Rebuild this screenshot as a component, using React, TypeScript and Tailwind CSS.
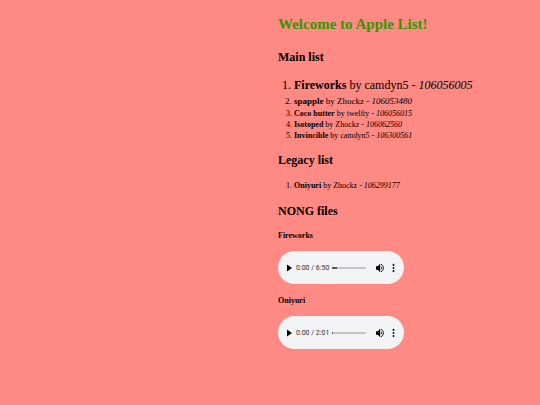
type Song = {
    name: string;
    author: string;
    id: string;
    size: string;
};

const mainList: Song[] = [
    { name: "Fireworks", author: "camdyn5", id: "106056005", size: "text-[12px] leading-[17px]" },
    { name: "spapple", author: "Zhockz", id: "106053480", size: "text-[9px] leading-[14px]" },
    { name: "Coco butter", author: "twelfty", id: "106056015", size: "text-[8px] leading-[11px]" },
    { name: "Isotoped", author: "Zhockz", id: "106062560", size: "text-[8px] leading-[11px]" },
    { name: "Invincible", author: "camdyn5", id: "106300561", size: "text-[8px] leading-[11px]" },
];

const legacyList: Song[] = [
    { name: "Oniyuri", author: "Zhockz", id: "106299177", size: "text-[8px] leading-[11px]" },
];

function SongList({ songs }: { songs: Song[] }) {
    return (
        <ol className="list-decimal pl-4 mt-3">
            {songs.map((song) => (
                <li key={song.id} className={song.size}>
                    <b>{song.name}</b> by {song.author} - <i>{song.id}</i>
                </li>
            ))}
        </ol>
    );
}

function Player({ title, duration, thumb }: { title: string; duration: string; thumb: string }) {
    return (
        <div className="mt-[10px] flex h-[33px] w-[126px] items-center rounded-full bg-[#f1f3f4] px-[9px] font-[Roboto,sans-serif]">
            <button type="button" aria-label={`Play ${title}`} className="cursor-pointer">
                <svg width="5" height="8" viewBox="0 0 5 8" className="block">
                    <path d="M0 0.5L5 4L0 7.5Z" fill="#000" />
                </svg>
            </button>
            <span className="ml-1 w-9 text-[7px] leading-3 whitespace-nowrap text-[#303133]">
                0:00 / {duration}
            </span>
            <input
                type="range"
                min="0"
                max="100"
                defaultValue="0"
                aria-label={`${title} position`}
                className={`h-0.5 w-[34px] appearance-none rounded-full bg-[#c2c4c5] [&::-webkit-slider-thumb]:h-0.5 [&::-webkit-slider-thumb]:appearance-none [&::-webkit-slider-thumb]:bg-[#55575a] ${thumb}`}
            />
            <button type="button" aria-label={`Mute ${title}`} className="ml-auto cursor-pointer">
                <svg width="8" height="10" viewBox="0 0 8 10" className="block">
                    <path d="M0 3.3H1.8L4.2 0.8V9.2L1.8 6.7H0Z" fill="#000" />
                    <path d="M5 3.2C6 4 6 6 5 6.8Z" fill="#000" />
                    <path d="M5 1.2C8.1 2.4 8.1 7.6 5 8.8" fill="none" stroke="#000" strokeWidth="0.9" />
                </svg>
            </button>
            <button type="button" aria-label={`More options for ${title}`} className="ml-2 cursor-pointer">
                <svg width="3" height="10" viewBox="0 0 3 10" className="block">
                    <ellipse cx="1.5" cy="1.9" rx="0.9" ry="1.1" fill="#000" />
                    <ellipse cx="1.5" cy="5" rx="0.9" ry="1.1" fill="#000" />
                    <ellipse cx="1.5" cy="8.1" rx="0.9" ry="1.1" fill="#000" />
                </svg>
            </button>
        </div>
    );
}

export default function App() {
    return (
        <div className="min-h-screen bg-[#ff8983] pt-[14px] pb-4 pl-[50%] font-['Liberation_Serif',serif] text-black">
            <main className="pl-2">
                <h1 className="text-[15px] leading-5 font-bold text-[#359600]">Welcome to Apple List!</h1>

                <h2 className="mt-[15px] text-[12px] leading-4 font-bold">Main list</h2>
                <SongList songs={mainList} />

                <h2 className="mt-[11px] text-[12px] leading-4 font-bold">Legacy list</h2>
                <SongList songs={legacyList} />

                <h2 className="mt-3 text-[12px] leading-4 font-bold">NONG files</h2>

                <h4 className="mt-3 text-[8px] leading-[10px] font-bold">Fireworks</h4>
                <Player title="Fireworks" duration="6:50" thumb="[&::-webkit-slider-thumb]:w-[5px]" />

                <h4 className="mt-3 text-[8px] leading-[10px] font-bold">Oniyuri</h4>
                <Player title="Oniyuri" duration="2:01" thumb="[&::-webkit-slider-thumb]:w-px" />
            </main>
        </div>
    );
}
